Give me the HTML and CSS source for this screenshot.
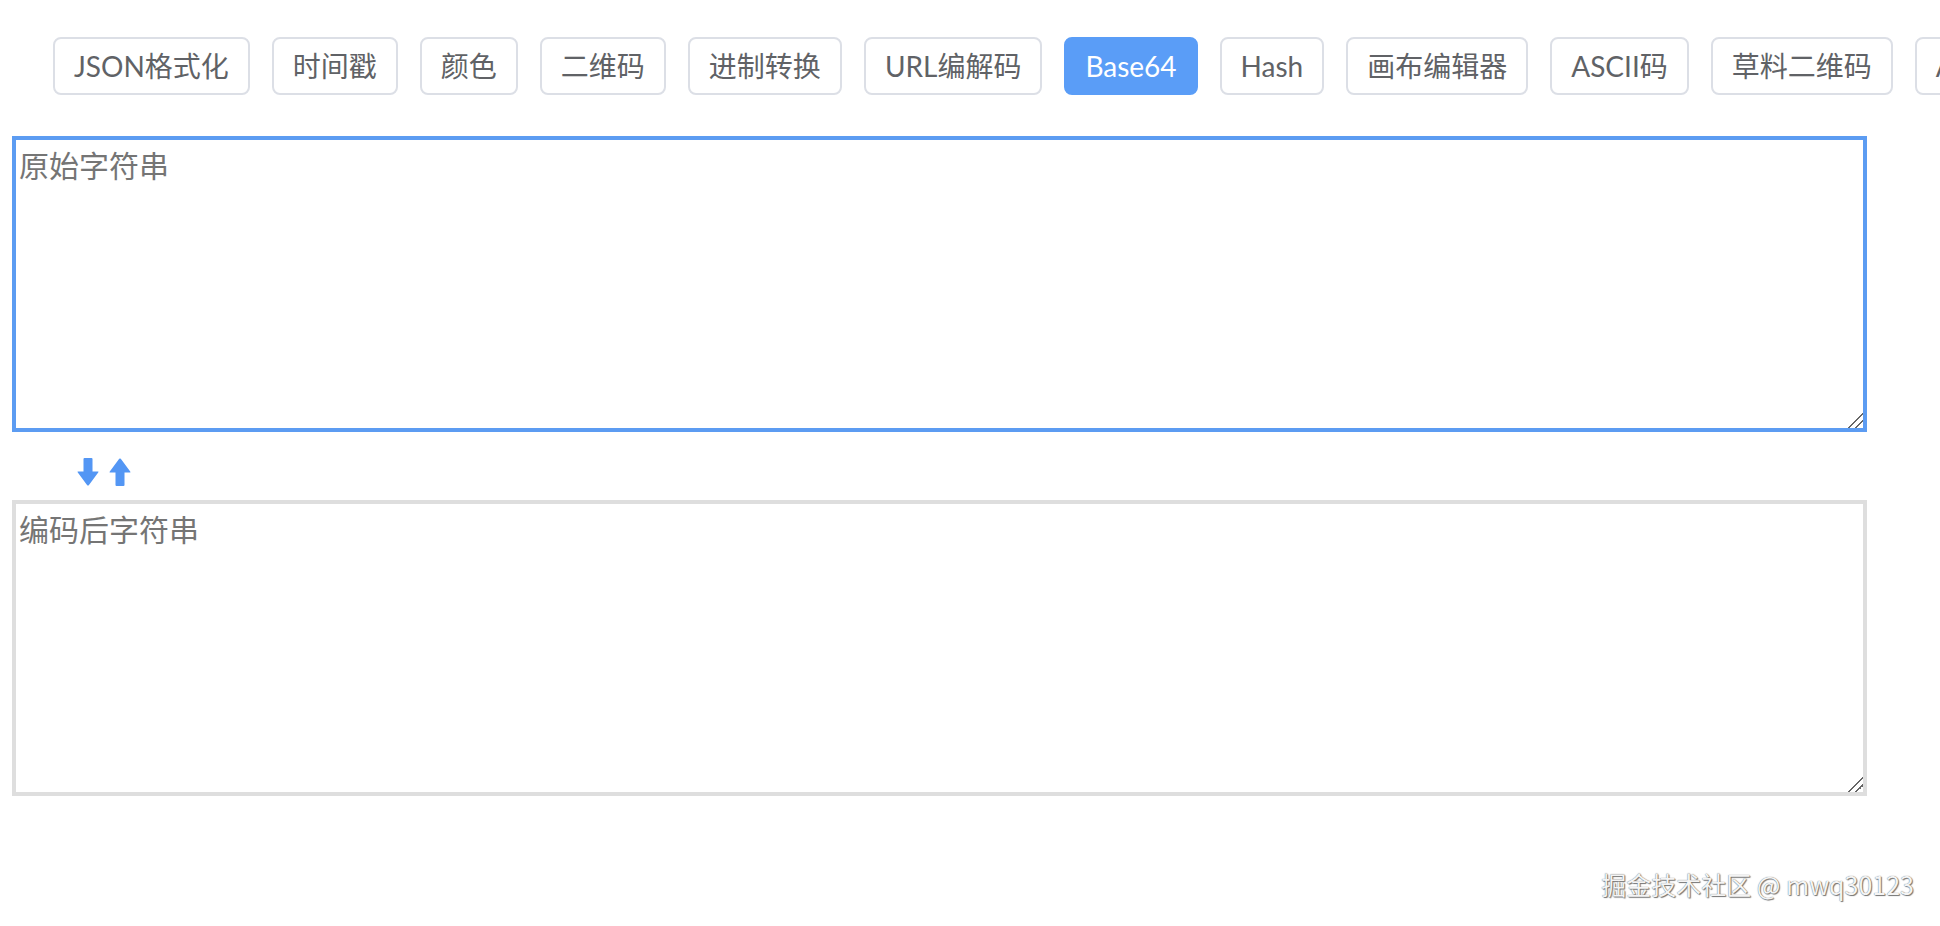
FILE: index.html
```html
<!DOCTYPE html>
<html lang="zh-CN">
<head>
  <meta charset="UTF-8" />
  <meta name="viewport" content="width=device-width, initial-scale=1.0"/>
  <title>Base64</title>
  <link rel="stylesheet" href="styles.css">
</head>
<body>

  <!-- tool tabs -->
  <div class="tabs">
    <button class="tab">JSON格式化</button>
    <button class="tab">时间戳</button>
    <button class="tab">颜色</button>
    <button class="tab">二维码</button>
    <button class="tab">进制转换</button>
    <button class="tab">URL编解码</button>
    <button class="tab active">Base64</button>
    <button class="tab">Hash</button>
    <button class="tab">画布编辑器</button>
    <button class="tab">ASCII码</button>
    <button class="tab">草料二维码</button>
    <button class="tab">AES加解密</button>
  </div>

  <!-- base64 box -->
  <div class="main">
    <textarea class="box focus" placeholder="原始字符串"></textarea>

    <div class="arrows">
      <svg class="arrow" viewBox="0 0 22 28" width="22" height="28">
        <path d="M6.5 1 Q6.5 0 7.5 0 H14.5 Q15.5 0 15.5 1 V13.5 H21 Q22 13.5 21.2 14.4 L11.8 27.2 Q11 28 10.2 27.2 L0.8 14.4 Q0 13.5 1 13.5 H6.5 Z"/>
      </svg>
      <svg class="arrow" viewBox="0 0 22 28" width="22" height="28">
        <path d="M6.5 27 Q6.5 28 7.5 28 H14.5 Q15.5 28 15.5 27 V14.5 H21 Q22 14.5 21.2 13.6 L11.8 0.8 Q11 0 10.2 0.8 L0.8 13.6 Q0 14.5 1 14.5 H6.5 Z"/>
      </svg>
    </div>

    <textarea class="box" placeholder="编码后字符串"></textarea>
  </div>

  <div class="watermark">掘金技术社区 @ mwq30123</div>

</body>
</html>
```

FILE: styles.css
```css
* { margin: 0; padding: 0; box-sizing: border-box; }
body {
  width: 1940px;
  height: 926px;
  overflow: hidden;
  background: #fff;
  font-family: Lato, "Noto Sans CJK SC", sans-serif;
  position: relative;
}

.tabs {
  display: flex;
  gap: 22px;
  padding: 37px 0 0 53px;
  white-space: nowrap;
  overflow: hidden;
}
.tab {
  flex: none;
  height: 58px;
  padding: 0 19px;
  font-family: Lato, "Noto Sans CJK SC", sans-serif;
  font-size: 28px;
  line-height: 1;
  color: #606266;
  background: #fff;
  border: 2px solid #dcdfe6;
  border-radius: 8px;
  cursor: pointer;
}
.tab.active {
  background: #5a9df7;
  border-color: #5a9df7;
  color: #fff;
}

.main {
  padding: 41px 73px 0 12px;
}
.box {
  display: block;
  width: 100%;
  height: 296px;
  padding: 6px 3px;
  border: 4px solid #dedede;
  outline: none;
  font-family: "Noto Sans CJK SC", sans-serif;
  font-size: 30px;
  line-height: 1.2;
  color: #333;
}
.box::placeholder { color: #757575; }
.box.focus { border-color: #5c9cf2; }
.box::-webkit-resizer {
  background: linear-gradient(135deg, transparent 48%, #666 48%, #666 56%, transparent 56%, transparent 72%, #666 72%, #666 80%, transparent 80%);
}

.arrows {
  display: flex;
  gap: 10px;
  padding: 26px 0 14px 65px;
}
.arrow { display: block; fill: #5396f4; }

.watermark {
  position: absolute;
  right: 26px;
  top: 866px;
  font-family: "Noto Sans CJK SC", sans-serif;
  font-size: 25px;
  color: #f4f4f4;
  text-shadow: 0 0 1px #555, 1px 1px 1px #777;
}
```
